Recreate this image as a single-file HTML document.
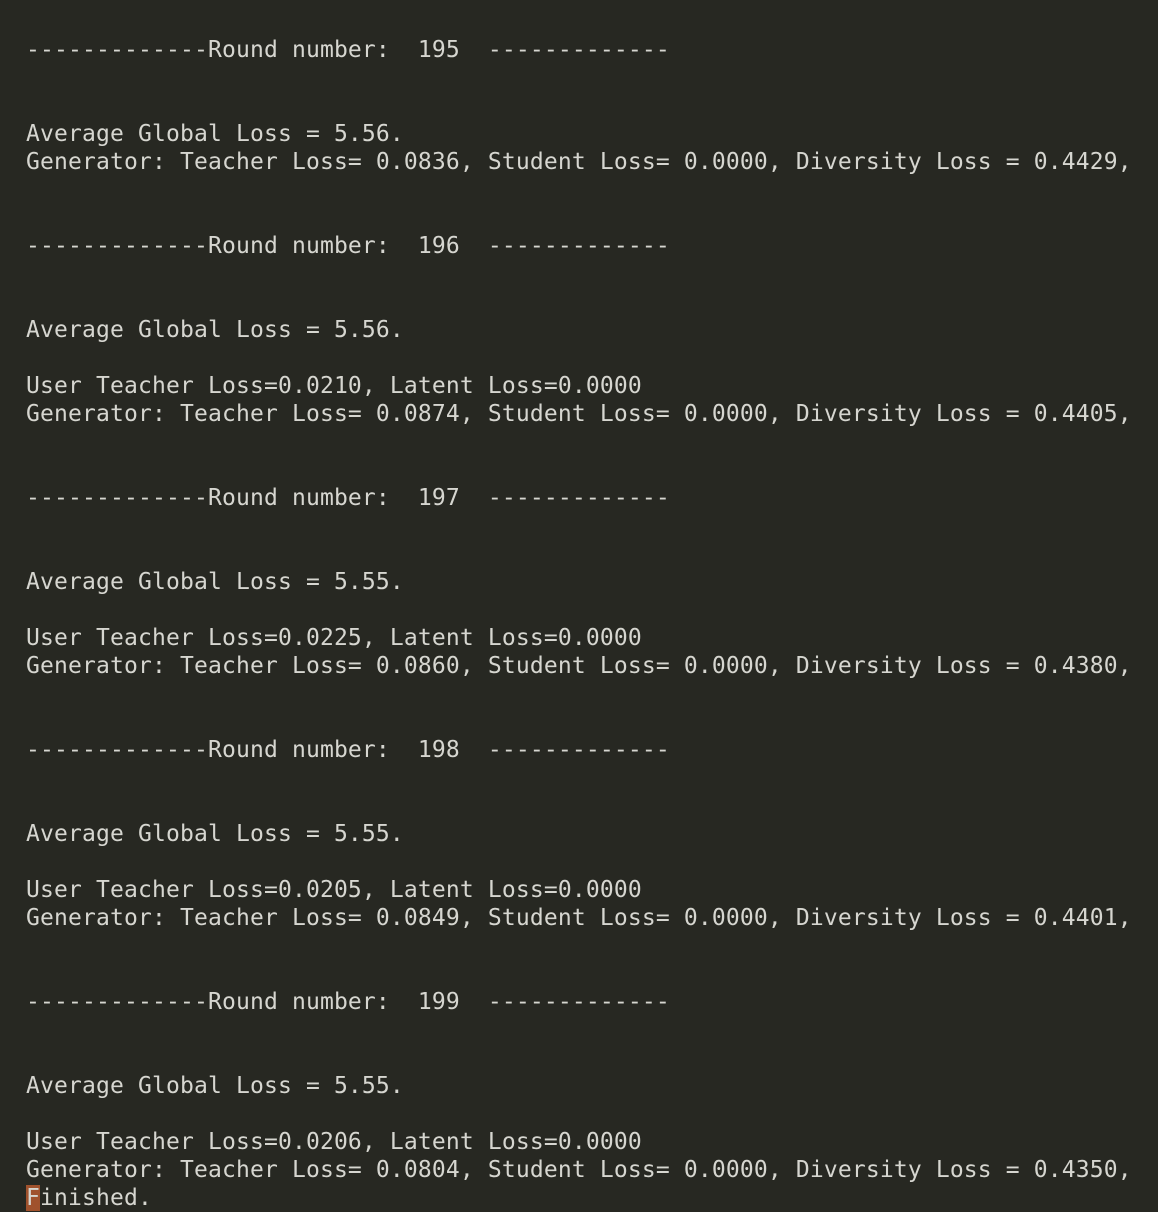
<!DOCTYPE html>
<html><head><meta charset="utf-8"><style>
html,body{margin:0;padding:0;background:#272822;width:1158px;height:1192px;overflow:hidden}
pre{margin:0;position:absolute;left:26px;top:36px;font-family:"DejaVu Sans Mono","Liberation Mono",monospace;font-size:23px;letter-spacing:0.15px;line-height:28px;color:#d6d6d0;white-space:pre}
.c{background:#a0522d;color:#d6d6d0}
</style></head><body><pre>-------------Round number:  195  -------------


Average Global Loss = 5.56.
Generator: Teacher Loss= 0.0836, Student Loss= 0.0000, Diversity Loss = 0.4429,


-------------Round number:  196  -------------


Average Global Loss = 5.56.

User Teacher Loss=0.0210, Latent Loss=0.0000
Generator: Teacher Loss= 0.0874, Student Loss= 0.0000, Diversity Loss = 0.4405,


-------------Round number:  197  -------------


Average Global Loss = 5.55.

User Teacher Loss=0.0225, Latent Loss=0.0000
Generator: Teacher Loss= 0.0860, Student Loss= 0.0000, Diversity Loss = 0.4380,


-------------Round number:  198  -------------


Average Global Loss = 5.55.

User Teacher Loss=0.0205, Latent Loss=0.0000
Generator: Teacher Loss= 0.0849, Student Loss= 0.0000, Diversity Loss = 0.4401,


-------------Round number:  199  -------------


Average Global Loss = 5.55.

User Teacher Loss=0.0206, Latent Loss=0.0000
Generator: Teacher Loss= 0.0804, Student Loss= 0.0000, Diversity Loss = 0.4350,
<span class="c">F</span>inished.</pre></body></html>
